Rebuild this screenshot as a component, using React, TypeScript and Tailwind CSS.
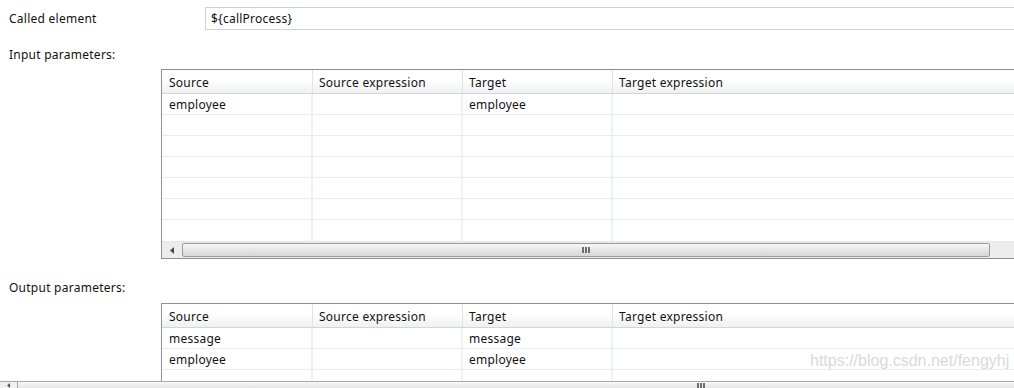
import React from "react";

const COLS = [
  { title: "Source", w: "w-[151px]", pad: "pl-[7px]" },
  { title: "Source expression", w: "w-[150px]", pad: "pl-[6px]" },
  { title: "Target", w: "w-[150px]", pad: "pl-[6px]" },
  { title: "Target expression", w: "flex-1", pad: "pl-[6px]" },
];

type Row = string[];

function HeaderRow() {
  return (
    <div className="flex h-[24px] border-b border-[#d5d5d5] bg-gradient-to-b from-white from-40% to-[#eff0f2]">
      {COLS.map((c, i) => (
        <div
          key={c.title}
          className={`${c.w} ${c.pad} pt-[2px] flex items-center ${i < 3 ? "border-r border-[#e2e2e2]" : ""}`}
        >
          {c.title}
        </div>
      ))}
    </div>
  );
}

function BodyRow({ row, last }: { row: Row; last?: boolean }) {
  return (
    <div className={`flex h-[21px] ${last ? "" : "border-b border-[#ebebeb]"}`}>
      {COLS.map((c, i) => (
        <div
          key={c.title}
          className={`${c.w} ${c.pad} pt-[2px] flex items-center ${i < 3 ? "border-r-2 border-[#edf2fa]" : ""}`}
        >
          {row[i] ?? ""}
        </div>
      ))}
    </div>
  );
}

function Grip() {
  return (
    <div className="flex gap-[1px]">
      <span className="w-[2px] h-[6px] bg-[#6e6e6e]" />
      <span className="w-[2px] h-[6px] bg-[#6e6e6e]" />
      <span className="w-[2px] h-[6px] bg-[#6e6e6e]" />
    </div>
  );
}

function LeftArrow() {
  return (
    <svg width="4" height="7" viewBox="0 0 4 7">
      <path d="M4 0 L0 3.5 L4 7 Z" fill="#4a4a4a" />
    </svg>
  );
}

function HScroll() {
  return (
    <div className="flex h-[17px] bg-[#ececec] border-t border-[#e6e6e6]">
      <div className="w-[20px] flex items-center justify-center">
        <LeftArrow />
      </div>
      <div className="w-[808px] my-[1px] rounded-[2px] border border-[#9c9c9c] bg-gradient-to-b from-[#f6f6f6] to-[#d6d6d6] flex items-center justify-center">
        <Grip />
      </div>
      <div className="flex-1" />
    </div>
  );
}

function ParamTable({ rows, scroll }: { rows: Row[]; scroll?: boolean }) {
  return (
    <div className="ml-[161px] border-l border-t border-b border-[#8f8f8f] bg-white">
      <HeaderRow />
      {rows.map((r, i) => (
        <BodyRow key={i} row={r} last={i === rows.length - 1} />
      ))}
      {scroll && <HScroll />}
    </div>
  );
}

export default function App() {
  const inputRows: Row[] = [["employee", "", "employee", ""], [], [], [], [], [], []];
  const outputRows: Row[] = [
    ["message", "", "message", ""],
    ["employee", "", "employee", ""],
    [],
  ];

  return (
    <div className="relative w-[1014px] h-[388px] overflow-hidden bg-white text-[12px] leading-[16px] tracking-[0.25px] text-[#111] font-['Noto_Sans','Open_Sans',sans-serif]">
      <div className="flex items-center mt-[7px] h-[23px]">
        <div className="w-[205px] pl-[9px]">Called element</div>
        <div className="flex-1 h-[23px] border border-r-0 border-[#c9d3df] flex items-center pl-[5px]">
          {"${callProcess}"}
        </div>
      </div>

      <div className="pl-[9px] mt-[17px]">Input parameters:</div>
      <div className="mt-[6px]">
        <ParamTable rows={inputRows} scroll />
      </div>

      <div className="pl-[9px] mt-[21px]">Output parameters:</div>
      <div className="mt-[7px]">
        <ParamTable rows={outputRows} />
      </div>

      {/* window scrollbar */}
      <div className="absolute left-0 right-0 bottom-0 h-[7px] flex border-t border-[#a9a9a9] bg-[#f0f0f0]">
        <div className="w-[17px] flex items-end justify-center">
          <svg width="3" height="5" viewBox="0 0 3 5">
            <path d="M3 0 L0 2.5 L3 5 Z" fill="#555" />
          </svg>
        </div>
        <div className="flex-1 border-l border-[#a9a9a9] bg-gradient-to-b from-[#f8f8f8] to-[#e4e4e4] flex justify-center pl-[370px]">
          <div className="flex gap-[1px] mt-[1px]">
            <span className="w-[2px] h-[5px] bg-[#6e6e6e]" />
            <span className="w-[2px] h-[5px] bg-[#6e6e6e]" />
            <span className="w-[2px] h-[5px] bg-[#6e6e6e]" />
          </div>
        </div>
      </div>

      <div className="absolute left-[810px] top-[351px] text-[16px] leading-[20px] tracking-normal text-[#d9d9d9] font-['Liberation_Sans',sans-serif]">
        https://blog.csdn.net/fengyhj
      </div>
    </div>
  );
}
